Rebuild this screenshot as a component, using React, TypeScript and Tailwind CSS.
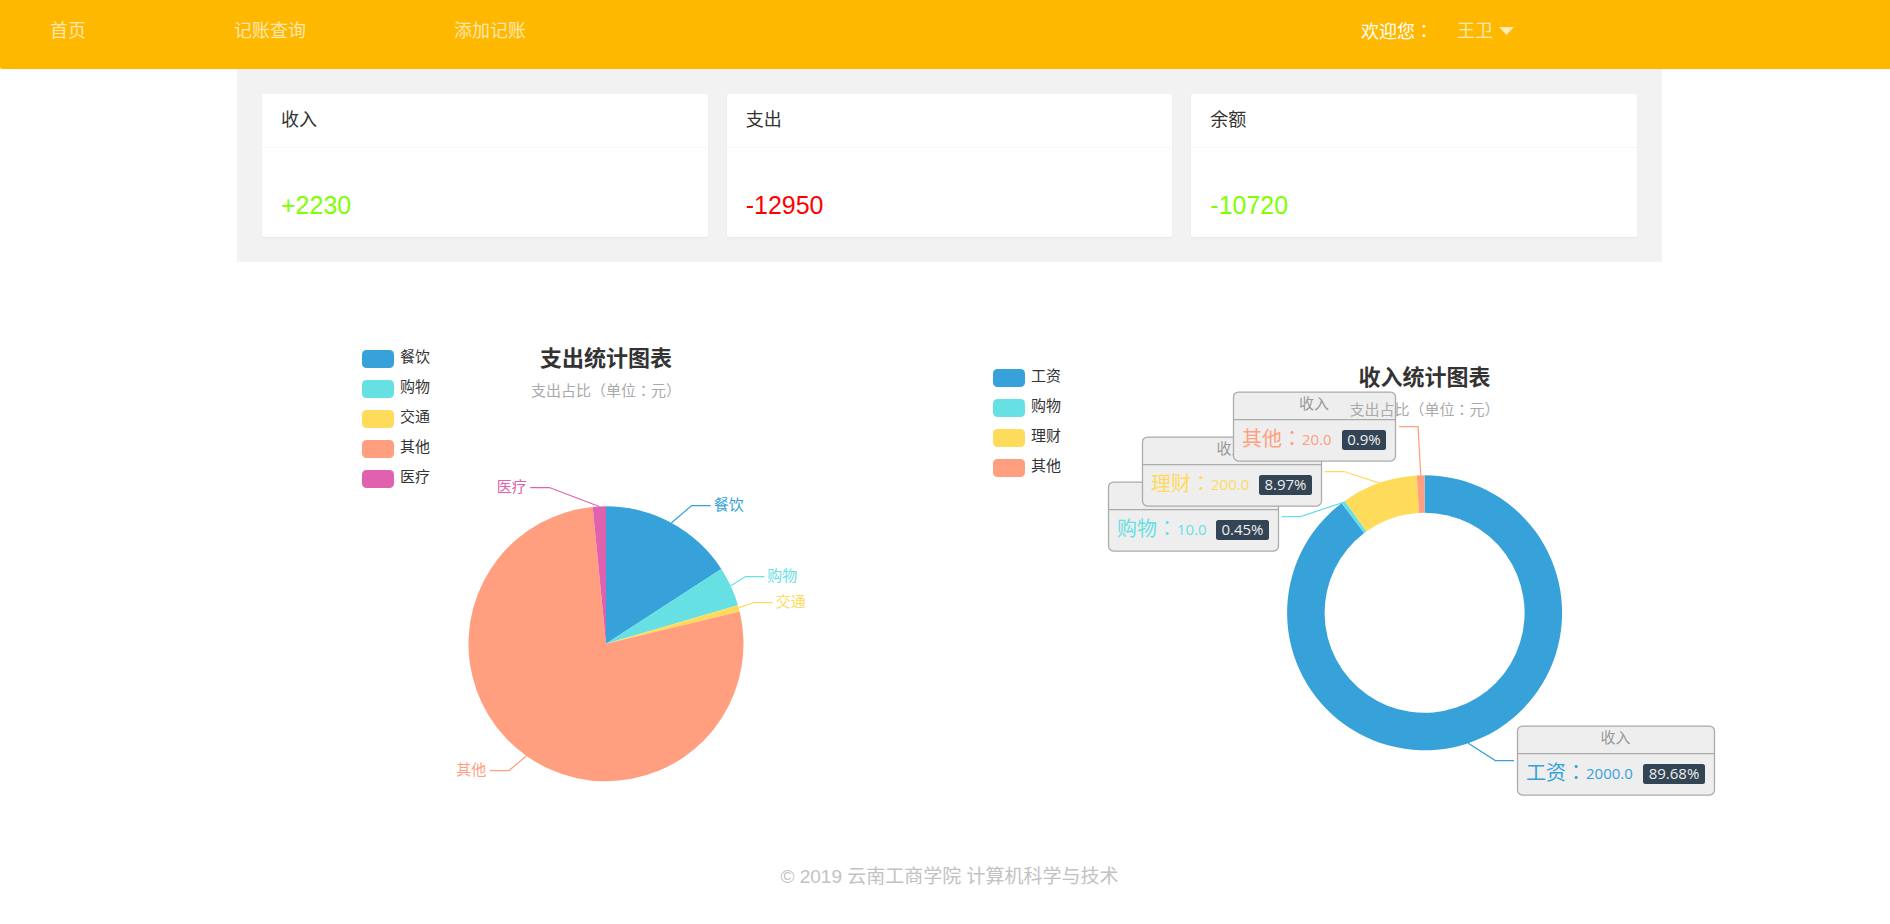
import React from "react";

type Point = [number, number];

interface Slice {
  name: string;
  value: number;
  color: string;
  line: Point[];
}

const CN = "font-['Liberation_Sans','Noto_Sans_CJK_SC',sans-serif]";
const CHART_FONT = "font-['Open_Sans','Noto_Sans_CJK_SC',sans-serif]";
const COLON_FONT = "font-['Noto_Sans_CJK_TC',sans-serif]";

const summary = [
  { title: "收入", amount: "+2230", color: "text-[#7fff00]" },
  { title: "支出", amount: "-12950", color: "text-[#ff0000]" },
  { title: "余额", amount: "-10720", color: "text-[#7fff00]" },
];

const expenses: Slice[] = [
  { name: "餐饮", value: 2050, color: "#37a2da", line: [[671.3, 522], [691.7, 504.5], [710.7, 504.5]] },
  { name: "购物", value: 600, color: "#67e0e3", line: [[730.7, 584.7], [745.7, 575.5], [764.3, 575.5]] },
  { name: "交通", value: 100, color: "#ffdb5c", line: [[739, 606.7], [754, 601.5], [772.7, 601.5]] },
  { name: "其他", value: 10000, color: "#ff9f7f", line: [[526.3, 755], [509, 769.5], [489.7, 769.5]] },
  { name: "医疗", value: 200, color: "#e062ae", line: [[599.3, 505.5], [549.3, 486.5], [530.3, 486.5]] },
];

const incomes: Slice[] = [
  { name: "工资", value: 2000, color: "#37a2da", line: [[1468.3, 742.3], [1495.3, 759.5], [1514, 759.5]] },
  { name: "购物", value: 10, color: "#67e0e3", line: [[1343.5, 501.3], [1300.6, 515.5], [1281.8, 515.5]] },
  { name: "理财", value: 200, color: "#ffdb5c", line: [[1380.2, 482.3], [1344.2, 470.5], [1324.3, 470.5]] },
  { name: "其他", value: 20, color: "#ff9f7f", line: [[1420.8, 474.7], [1418, 425.5], [1399, 425.5]] },
];

const callouts = [
  { x: 1517, y: 725, width: 197, badge: 62, percent: "89.68%" },
  { x: 1108, y: 481, width: 170, badge: 53, percent: "0.45%" },
  { x: 1142, y: 436, width: 179, badge: 53, percent: "8.97%" },
  { x: 1233, y: 391, width: 162, badge: 44, percent: "0.9%" },
];

function sectorPath(cx: number, cy: number, r: number, inner: number, from: number, to: number) {
  const at = (radius: number, angle: number) =>
    `${cx + radius * Math.sin(angle)} ${cy - radius * Math.cos(angle)}`;
  const large = to - from > Math.PI ? 1 : 0;
  if (inner === 0) {
    return `M${cx} ${cy}L${at(r, from)}A${r} ${r} 0 ${large} 1 ${at(r, to)}Z`;
  }
  return `M${at(r, from)}A${r} ${r} 0 ${large} 1 ${at(r, to)}L${at(inner, to)}A${inner} ${inner} 0 ${large} 0 ${at(inner, from)}Z`;
}

function Sectors({ data, cx, cy, inner = 0 }: { data: Slice[]; cx: number; cy: number; inner?: number }) {
  const total = data.reduce((sum, s) => sum + s.value, 0);
  let angle = 0;
  return (
    <g>
      {data.map((s) => {
        const from = angle;
        angle += (s.value / total) * Math.PI * 2;
        return <path key={s.name} d={sectorPath(cx, cy, 137.5, inner, from, angle)} fill={s.color} />;
      })}
      {data.map((s) => (
        <polyline
          key={s.name}
          points={s.line.map((p) => p.join(",")).join(" ")}
          fill="none"
          stroke={s.color}
          strokeWidth={1.25}
        />
      ))}
    </g>
  );
}

function Legend({ data, x, y }: { data: Slice[]; x: number; y: number }) {
  return (
    <g>
      {data.map((s, i) => (
        <g key={s.name}>
          <rect x={x} y={y + i * 30} width={32} height={18} rx={4.5} fill={s.color} />
          <text x={x + 38} y={y + 12 + i * 30} fill="#333333" className="text-[15px]">
            {s.name}
          </text>
        </g>
      ))}
    </g>
  );
}

function Heading({ x, y, title }: { x: number; y: number; title: string }) {
  return (
    <g textAnchor="middle">
      <text x={x} y={y} fill="#333333" className="text-[22px] font-bold">
        {title}
      </text>
      <text x={x} y={y + 30} fill="#aaaaaa" className="text-[15px]">
        支出占比（单位<tspan className={COLON_FONT}>：</tspan>元）
      </text>
    </g>
  );
}

function ExpenseChart() {
  return (
    <svg
      role="img"
      aria-label="支出统计图表"
      viewBox="237 330 738 480"
      className={`h-[480px] w-[738px] shrink-0 ${CHART_FONT}`}
    >
      <Legend data={expenses} x={362} y={349} />
      <Heading x={606} y={365} title="支出统计图表" />
      <Sectors data={expenses} cx={606} cy={642.8} />
      {expenses.map((s) => {
        const [ex, ey] = s.line[2];
        const right = ex > 606;
        return (
          <text
            key={s.name}
            x={right ? ex + 3 : ex - 3.5}
            y={ey + 4}
            textAnchor={right ? "start" : "end"}
            fill={s.color}
            className="text-[15px]"
          >
            {s.name}
          </text>
        );
      })}
    </svg>
  );
}

function IncomeChart() {
  return (
    <svg
      role="img"
      aria-label="收入统计图表"
      viewBox="975 330 900 480"
      className={`h-[480px] w-[900px] shrink-0 ${CHART_FONT}`}
    >
      <Legend data={incomes} x={993} y={368} />
      <Sectors data={incomes} cx={1424.6} cy={611.8} inner={100} />
      {callouts.map((c, i) => {
        const s = incomes[i];
        const badgeX = c.x + c.width - 9 - c.badge;
        return (
          <g key={s.name}>
            <rect x={c.x + 0.5} y={c.y} width={c.width} height={69} rx={5} fill="#eeeeee" stroke="#aaaaaa" strokeWidth={1.25} />
            <path d={`M${c.x} ${c.y + 27.5}h${c.width}`} stroke="#aaaaaa" strokeWidth={1.25} />
            <text x={c.x + c.width / 2} y={c.y + 17} textAnchor="middle" fill="#999999" className="text-[15px]">
              收入
            </text>
            <text x={c.x + 9} y={c.y + 54} fill={s.color} className="text-[20px]">
              {s.name}
              <tspan className={COLON_FONT}>：</tspan>
            </text>
            <text x={c.x + 69} y={c.y + 53} fill={s.color} className="text-[15px]">
              {s.value.toFixed(1)}
            </text>
            <rect x={badgeX} y={c.y + 38} width={c.badge} height={20} rx={2.5} fill="#334455" />
            <text x={badgeX + c.badge / 2} y={c.y + 53} textAnchor="middle" fill="#eeeeee" className="text-[15px] font-medium">
              {c.percent}
            </text>
          </g>
        );
      })}
      <Heading x={1424.6} y={384} title="收入统计图表" />
    </svg>
  );
}

export default function App() {
  return (
    <div className={`min-h-screen bg-white text-[#333333] ${CN}`}>
      <header className="flex h-[69px] items-start justify-between rounded-bl-[2px] bg-[#ffb800] pl-[50px] pr-[376px] text-[18px] leading-[60px]">
        <nav className="flex gap-[148px] leading-[62px] text-white/70">
          <a href="#home">首页</a>
          <a href="#query">记账查询</a>
          <a href="#add">添加记账</a>
        </nav>
        <div className="flex items-center gap-6">
          <span className="text-white">
            欢迎您<span className={COLON_FONT}>：</span>
          </span>
          <button type="button" className="flex items-center gap-[6px] text-white/70">
            王卫
            <svg viewBox="0 0 15 8" className="h-2 w-[15px]" fill="currentColor" aria-hidden="true">
              <path d="M0 0h15L7.5 8z" />
            </svg>
          </button>
        </div>
      </header>

      <main>
        <div className="pl-[9px]">
          <section className="mx-auto grid max-w-[1425px] grid-cols-3 gap-[19px] bg-[#f2f2f2] p-[25px]">
            {summary.map((item) => (
              <article key={item.title} className="h-[143px] rounded-[2px] bg-white shadow-[0_1px_2px_0_rgba(0,0,0,0.05)]">
                <h2 className="h-[54px] border-b border-[#f6f6f6] px-[19px] text-[18px] leading-[52px]">
                  {item.title}
                </h2>
                <p className={`px-[19px] pt-[42px] text-[25px] leading-[30px] ${item.color}`}>{item.amount}</p>
              </article>
            ))}
          </section>
        </div>
        <section className="flex pl-[237px] pt-[69px]">
          <ExpenseChart />
          <IncomeChart />
        </section>
      </main>

      <footer className="pb-7 pl-[9px] pt-[51px] text-center text-[19px] leading-[30px] text-[#c2c2c2]">
        © 2019 云南工商学院 计算机科学与技术
      </footer>
    </div>
  );
}
